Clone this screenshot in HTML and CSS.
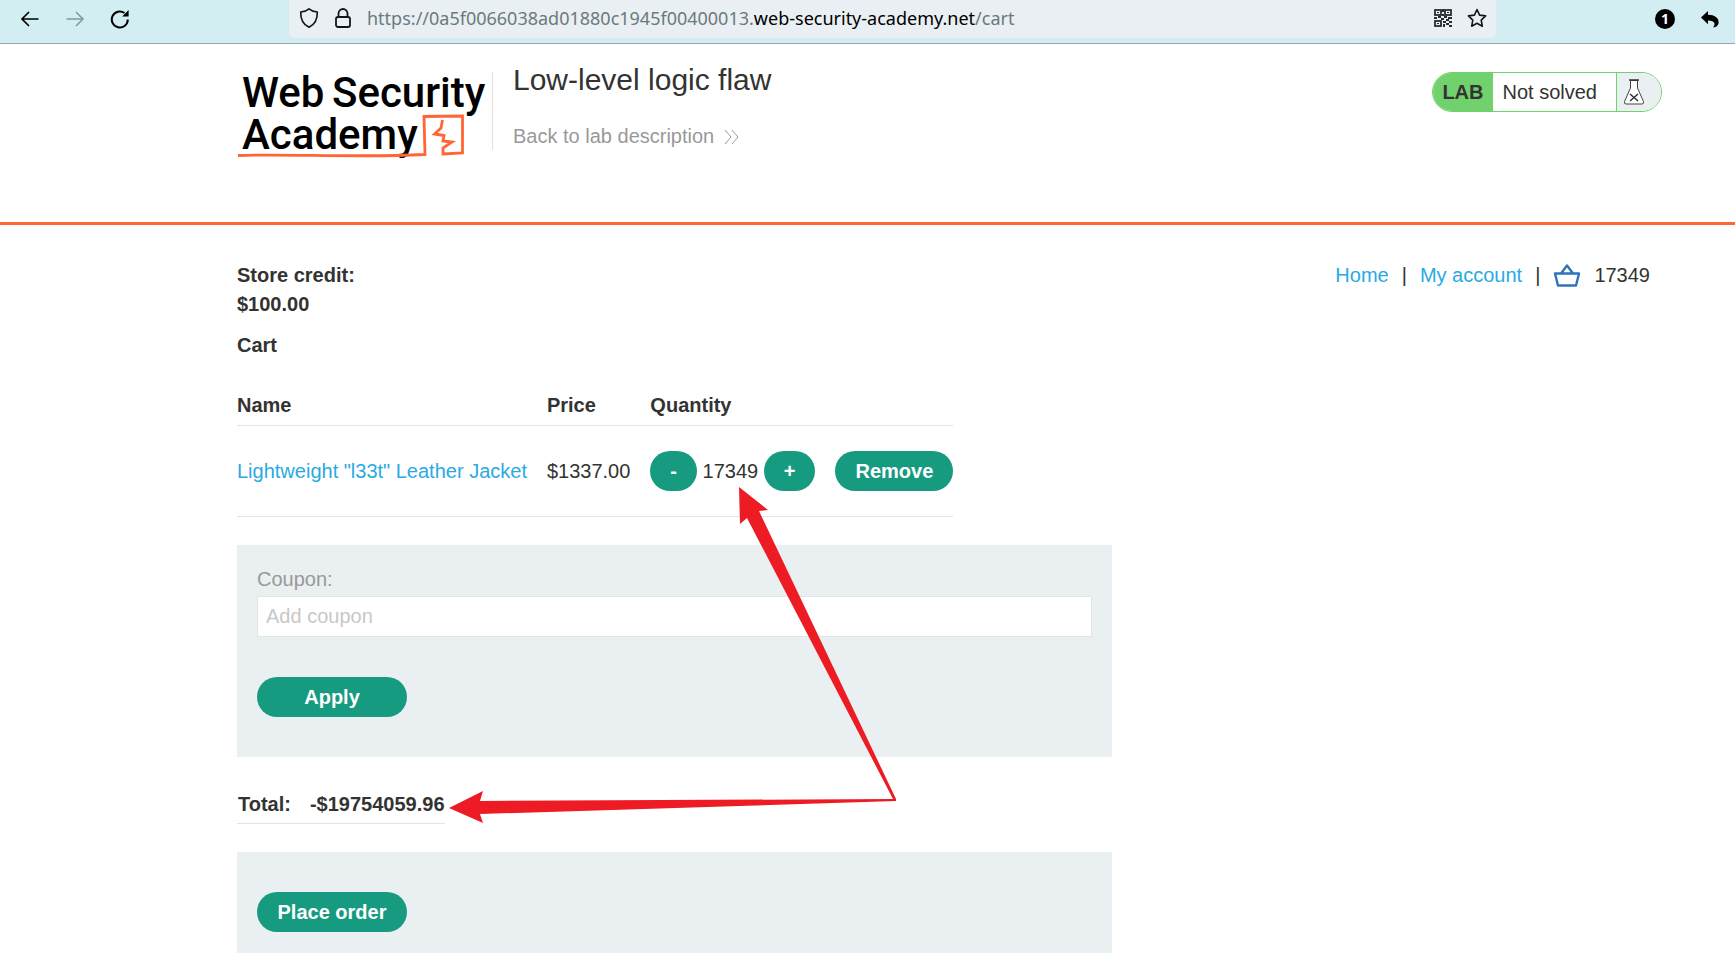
FILE: index.html
```html
<!DOCTYPE html>
<html lang="en">
<head>
<meta charset="utf-8">
<title>Low-level logic flaw</title>
<link rel="stylesheet" href="styles.css">
</head>
<body>
<div class="toolbar">
  <div class="toolbar-nav">
    <button class="icon-button" type="button" aria-label="Back"><svg width="20" height="20" viewBox="0 0 20 20"><path d="M18.500 10H2M9 3L2 10l7 7" fill="none" stroke="#000" stroke-width="1.700"/></svg></button>
    <button class="icon-button" type="button" aria-label="Forward"><svg width="20" height="20" viewBox="0 0 20 20"><path d="M1.500 10H18M11 3l7 7-7 7" fill="none" stroke="#88989b" stroke-width="1.500"/></svg></button>
    <button class="icon-button" type="button" aria-label="Reload"><svg width="20" height="20" viewBox="0 0 20 20"><path d="M17.800 10.500A8 8 0 1 1 14.500 4" fill="none" stroke="#000" stroke-width="2"/><path d="M18.600 1v6.500h-6.500z"/></svg></button>
  </div>
  <div class="address">
    <svg width="20" height="22" viewBox="0 0 20 22"><path d="M10 1.800C12.500 4 15 4.600 18.300 5C18.500 12 16 17.500 10 20.200C4 17.500 1.500 12 1.700 5C5 4.600 7.500 4 10 1.800z" fill="none" stroke="#15141a" stroke-width="1.600" stroke-linejoin="round"/></svg>
    <svg width="18" height="22" viewBox="0 0 18 22"><rect x="2" y="10" width="14" height="10" rx="2" fill="none" stroke="#15141a" stroke-width="1.800"/><path d="M4.500 10V6.500a4.500 4.500 0 0 1 9 0V10" fill="none" stroke="#15141a" stroke-width="1.800"/></svg>
    <div class="url">https://0a5f0066038ad01880c1945f00400013.<span class="url-domain">web-security-academy.net</span>/cart</div>
    <button class="icon-button" type="button" aria-label="QR code"><svg width="18" height="18" viewBox="0 0 18 18"><g fill="none" stroke="#2b2b33" stroke-width="1.800"><rect x="1" y="1" width="6" height="5"/><rect x="11" y="1" width="6" height="5"/><rect x="1" y="12" width="6" height="5"/></g><path fill="#2b2b33" d="M3 3h2v1H3zM13 3h2v1h-2zM3 14h2v1H3zM8 0h2v3H8zM8 5h2v2H8zM0 8h3v2H0zM4 7h3v2H4zM7 9h3v2H7zM10 7h3v2h-3zM14 8h4v2h-4zM12 10h3v2h-3zM9 12h3v2H9zM15 12h3v2h-3zM12 14h3v2h-3zM9 15h2v3H9zM15 16h3v2h-3z"/></svg></button>
    <button class="icon-button" type="button" aria-label="Bookmark"><svg width="20" height="20" viewBox="0 0 20 20"><path d="M10 1.500l2.600 5.600 6 .8-4.400 4.200 1.100 6.100L10 15.200l-5.300 3 1.100-6.100L1.400 7.900l6-.8z" fill="none" stroke="#15141a" stroke-width="1.600" stroke-linejoin="round"/></svg></button>
  </div>
  <div class="toolbar-end">
    <button class="icon-button count" type="button">1</button>
    <button class="icon-button" type="button" aria-label="Undo"><svg width="18" height="18" viewBox="0 0 18 18"><path d="M7 1v3.800C13.500 4.800 17.800 8 17.600 12.500C17.500 15.500 15 17.400 12 17.400C15 14.500 14 10.500 7 10.600V14.200L0 7.400z"/></svg></button>
  </div>
</div>
<div class="page">
  <header class="lab-header">
    <a class="logo" href="#" aria-label="Web Security Academy">
      <svg width="255" height="100" viewBox="0 0 255 100">
        <g class="logo-text"><text x="5" y="45">Web</text><text x="95" y="45">Security</text><text x="5" y="87">Academy</text></g>
        <path d="M1 93.500C50 91.500 120 96 188 92.500L187 54.500L225.500 54L225.500 91L206 92L206 86L215 80L206 79L207 73.500L197.500 72L204 66L205.500 58" fill="none" stroke="#ff6633" stroke-width="2.800"/>
      </svg>
    </a>
    <div class="lab-title">
      <h1>Low-level logic flaw</h1>
      <a class="back" href="#">Back to lab description <svg width="15" height="16" viewBox="0 0 15 16"><path d="M1 1l6 7-6 7M8 1l6 7-6 7" fill="none" stroke="#999" stroke-width="1"/></svg></a>
    </div>
    <div class="lab-status">
      <span class="lab-tag">LAB</span><span class="lab-state">Not solved</span>
      <span class="lab-flask"><svg width="22" height="26" viewBox="0 0 22 26"><path d="M7.500 1.500V9L1.500 22.500Q1 25 3 25H19Q21 25 20.500 22.500L14.500 9V1.500z" fill="#fff" stroke="#444" stroke-width="1"/><path d="M6 1h10M7 15l8 7M15 15l-8 7" fill="none" stroke="#333" stroke-width="1.500"/></svg></span>
    </div>
  </header>
  <main class="content">
    <div class="intro">
      <div class="credit"><strong>Store credit:</strong><strong>$100.00</strong></div>
      <nav class="links">
        <a href="#">Home</a><span>|</span><a href="#">My account</a><span>|</span>
        <a class="basket" href="#" aria-label="Basket"><svg width="28" height="26" viewBox="0 0 28 26"><path d="M2 10.500h24l-3 12H5zM8 10.500l6-8 6 8" fill="none" stroke="#2f73bd" stroke-width="2.400" stroke-linejoin="round"/></svg></a>
        <span>17349</span>
      </nav>
    </div>
    <h2>Cart</h2>
    <table class="cart">
      <thead><tr><th>Name</th><th>Price</th><th>Quantity</th><th></th></tr></thead>
      <tbody><tr>
        <td><a href="#">Lightweight "l33t" Leather Jacket</a></td>
        <td>$1337.00</td>
        <td><button class="button" type="button">-</button> 17349 <button class="button" type="button">+</button></td>
        <td><button class="button" type="button">Remove</button></td>
      </tr></tbody>
    </table>
    <form class="panel">
      <label for="coupon">Coupon:</label>
      <input id="coupon" type="text" placeholder="Add coupon">
      <button class="button button-wide" type="button">Apply</button>
    </form>
    <table class="total"><tbody><tr><th>Total:</th><th>-$19754059.96</th></tr></tbody></table>
    <form class="panel panel-order">
      <button class="button button-wide" type="button">Place order</button>
    </form>
    <svg class="arrows" width="450" height="340" viewBox="0 0 450 340"><path fill="#ed1c24" d="M291 2L320 25L311 26L448 314L448 316L32 329L35 338L1 323L35 306L32 316L445 314L299 33L292 39z"/></svg>
  </main>
</div>
</body>
</html>
```
FILE: styles.css
```css
* { box-sizing: border-box; }

body {
  margin: 0;
  height: 100vh;
  display: flex;
  flex-direction: column;
  background: #fff;
  color: #333332;
  font: 20px/29px "Liberation Sans", Arial, sans-serif;
}

a { color: #29aae3; text-decoration: none; }
svg { display: block; }

.toolbar {
  flex: none;
  display: flex;
  height: 44px;
  background: #d2eef2;
  border-bottom: 1px solid #96a8ab;
}

.toolbar-nav {
  width: 289px;
  flex: none;
  display: flex;
  align-items: center;
  gap: 25px;
  padding: 0 0 6px 20px;
}

.icon-button {
  border: 0;
  padding: 0;
  background: none;
}

.address {
  flex: 1;
  display: flex;
  align-items: center;
  gap: 15px;
  height: 38px;
  padding: 0 9px 2px 10px;
  background: #e9eff3;
  border-radius: 0 0 5px 5px;
}

.url {
  flex: 1;
  color: #6c7a7c;
  font: 18px/24px "Noto Sans", sans-serif;
  white-space: nowrap;
}

.url-domain { color: #000; }

.toolbar-end {
  width: 239px;
  flex: none;
  display: flex;
  justify-content: flex-end;
  align-items: center;
  gap: 26px;
  padding: 0 16px 6px 0;
}

.count {
  width: 20px;
  height: 20px;
  border-radius: 50%;
  background: #000;
  color: #fff;
  font: bold 14px/20px "Open Sans", sans-serif;
}

.page {
  flex: 1;
  min-height: 0;
  overflow-y: auto;
  scrollbar-width: none;
}

.lab-header {
  display: flex;
  align-items: flex-start;
  height: 181px;
  padding: 18px 73px 0 237px;
  border-bottom: 3px solid #ff6633;
}

.logo-text {
  font: 500 42px Roboto, sans-serif;
  fill: #000;
}

.lab-title {
  flex: 1;
  display: flex;
  flex-direction: column;
  gap: 24px;
  height: 78px;
  margin-top: 10px;
  padding-left: 20px;
  border-left: 1px solid #e0e0e0;
}

h1 {
  margin: -10px 0 0;
  font-size: 30px;
  line-height: 36px;
  font-weight: normal;
}

.back {
  display: flex;
  align-items: center;
  gap: 10px;
  color: #999;
}

.lab-status {
  display: flex;
  height: 40px;
  margin-top: 10px;
  border: 1px solid #70d16d;
  border-radius: 20px;
  overflow: hidden;
  line-height: 38px;
}

.lab-tag {
  padding: 0 9px;
  background: #70d16d;
  font-weight: bold;
}

.lab-state {
  padding: 0 19px 0 10px;
  border-right: 1px solid #70d16d;
}

.lab-flask {
  display: flex;
  align-items: center;
  width: 44px;
  padding-left: 6px;
  background: #eaeff2;
}

.content {
  position: relative;
  padding: 36px 73px 0 237px;
}

.intro {
  display: flex;
  justify-content: space-between;
  align-items: flex-start;
}

.credit { display: flex; flex-direction: column; }

.links {
  display: flex;
  align-items: center;
  gap: 13px;
  padding-right: 12px;
}

h2 {
  margin: 12px 0 31px;
  font-size: 20px;
  line-height: 29px;
}

table { border-collapse: collapse; }

th { text-align: left; }

.cart th { padding: 0 20px 5px 0; border-bottom: 1px solid #e4e4e4; }
.cart td { height: 91px; padding: 0 20px 0 0; border-bottom: 1px solid #e4e4e4; white-space: nowrap; }
.cart th:last-child, .cart td:last-child { padding-right: 0; }

.button {
  height: 40px;
  padding: 0 20px;
  border: 0;
  border-radius: 20px;
  background: #169b80;
  color: #fff;
  font: bold 20px/40px "Liberation Sans", Arial, sans-serif;
}

.button-wide { width: 150px; }

.panel {
  display: flex;
  flex-direction: column;
  align-items: flex-start;
  width: 875px;
  max-width: 100%;
  margin: 28px 0;
  padding: 20px 20px 40px;
  background: #eaeff2;
}

.panel label { color: #999; margin-bottom: 2px; }

.panel input {
  width: 100%;
  height: 41px;
  margin-bottom: 40px;
  padding: 0 8px;
  border: 1px solid #e2e4e5;
  color: #333332;
  font: inherit;
}

.panel input::placeholder { color: #c8c8c8; }

.panel-order { padding-top: 40px; margin-bottom: 0; }

.total th { padding: 5px 0 4px 1px; border-bottom: 1px solid #e4e4e4; }
.total th:first-child { padding-right: 18px; }

.arrows {
  position: absolute;
  left: 448px;
  top: 260px;
}
```
